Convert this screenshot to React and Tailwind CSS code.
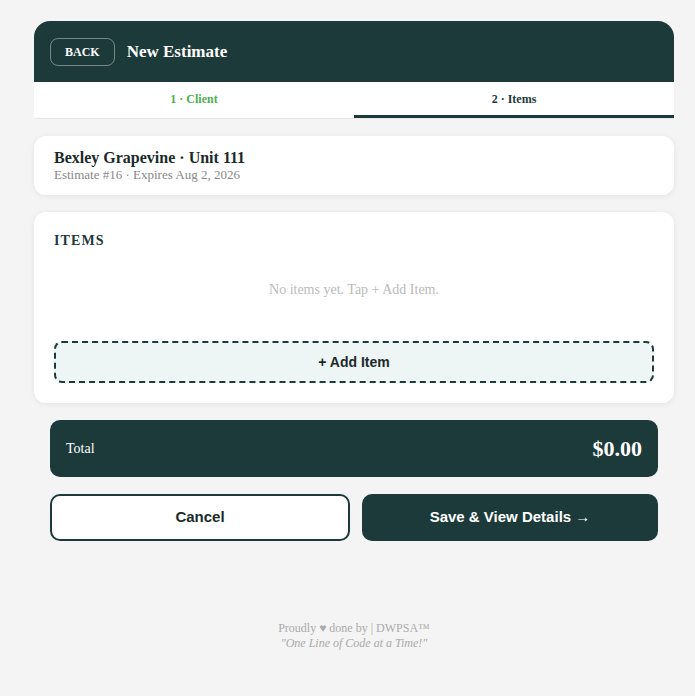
import React from 'react';

const serif = "font-['Liberation_Serif','Times_New_Roman',serif]";
const sans = "font-['Liberation_Sans',Arial,sans-serif]";

const App = () => {
  return (
    <div className={`min-h-[696px] bg-[#f4f4f4] pt-[21px] ${serif}`}>
      <div className="w-[640px] ml-[34px]">
        {/* Header */}
        <div className="h-[61px] bg-[#1c3a3a] rounded-t-[16px] flex items-center px-4 gap-3">
          <button className="h-[28px] px-[14px] rounded-[8px] border border-white/40 text-white text-[12px] font-bold">BACK</button>
          <h1 className="text-white text-[17px] font-bold">New Estimate</h1>
        </div>

        {/* Tabs */}
        <div className="grid grid-cols-2 bg-white border-b border-[#e8e8e8]">
          <div className="h-[36px] flex items-center justify-center text-[12px] font-bold text-[#4caf50] pb-[2px]">1 · Client</div>
          <div className="h-[36px] flex items-center justify-center text-[12px] font-bold text-[#1c3a3a] border-b-[3px] border-[#1c3a3a]">2 · Items</div>
        </div>

        {/* Client card */}
        <div className="mt-[17px] bg-white rounded-[12px] shadow-[0_1px_6px_rgba(0,0,0,0.07)] px-5 py-[13px]">
          <div className="text-[16px] leading-[18px] font-bold text-[#1c2a2a]">Bexley Grapevine · Unit 111</div>
          <div className="text-[13px] leading-[15px] text-[#888]">Estimate #16 · Expires Aug 2, 2026</div>
        </div>

        {/* Items card */}
        <div className="mt-[17px] bg-white rounded-[12px] shadow-[0_1px_6px_rgba(0,0,0,0.07)] px-5 pt-[21px] pb-5">
          <div className="text-[14px] leading-[16px] font-bold tracking-[0.08em] text-[#1c3a3a]">ITEMS</div>
          <div className="mt-[32px] text-center text-[14px] leading-[18px] text-[#bbb]">No items yet. Tap + Add Item.</div>
          <button className={`mt-[42px] w-full h-[42px] rounded-[8px] border-2 border-dashed border-[#1c3a3a] bg-[#eef6f5] text-[#1c2a2a] text-[14px] font-bold ${sans}`}>
            + Add Item
          </button>
        </div>

        <div className="px-4">
          {/* Total */}
          <div className="mt-[17px] h-[57px] bg-[#1c3a3a] rounded-[10px] flex items-center justify-between px-4 text-white">
            <span className="text-[14px]">Total</span>
            <span className="text-[22px] font-bold">$0.00</span>
          </div>

          {/* Actions */}
          <div className={`mt-[17px] grid grid-cols-[300px_1fr] gap-3 ${sans}`}>
            <button className="h-[47px] rounded-[10px] border-2 border-[#1c3a3a] bg-white text-[#1c2a2a] text-[15px] font-bold">Cancel</button>
            <button className="h-[47px] rounded-[10px] bg-[#1c3a3a] text-white text-[15px] font-bold">Save &amp; View Details →</button>
          </div>
        </div>

        {/* Footer */}
        <div className="mt-[80px] pb-10 text-center text-[12px] leading-[15px] text-[#aaa]">
          <div>Proudly ♥ done by | DWPSA™</div>
          <div className="italic">"One Line of Code at a Time!"</div>
        </div>
      </div>
    </div>
  );
};

export default App;
